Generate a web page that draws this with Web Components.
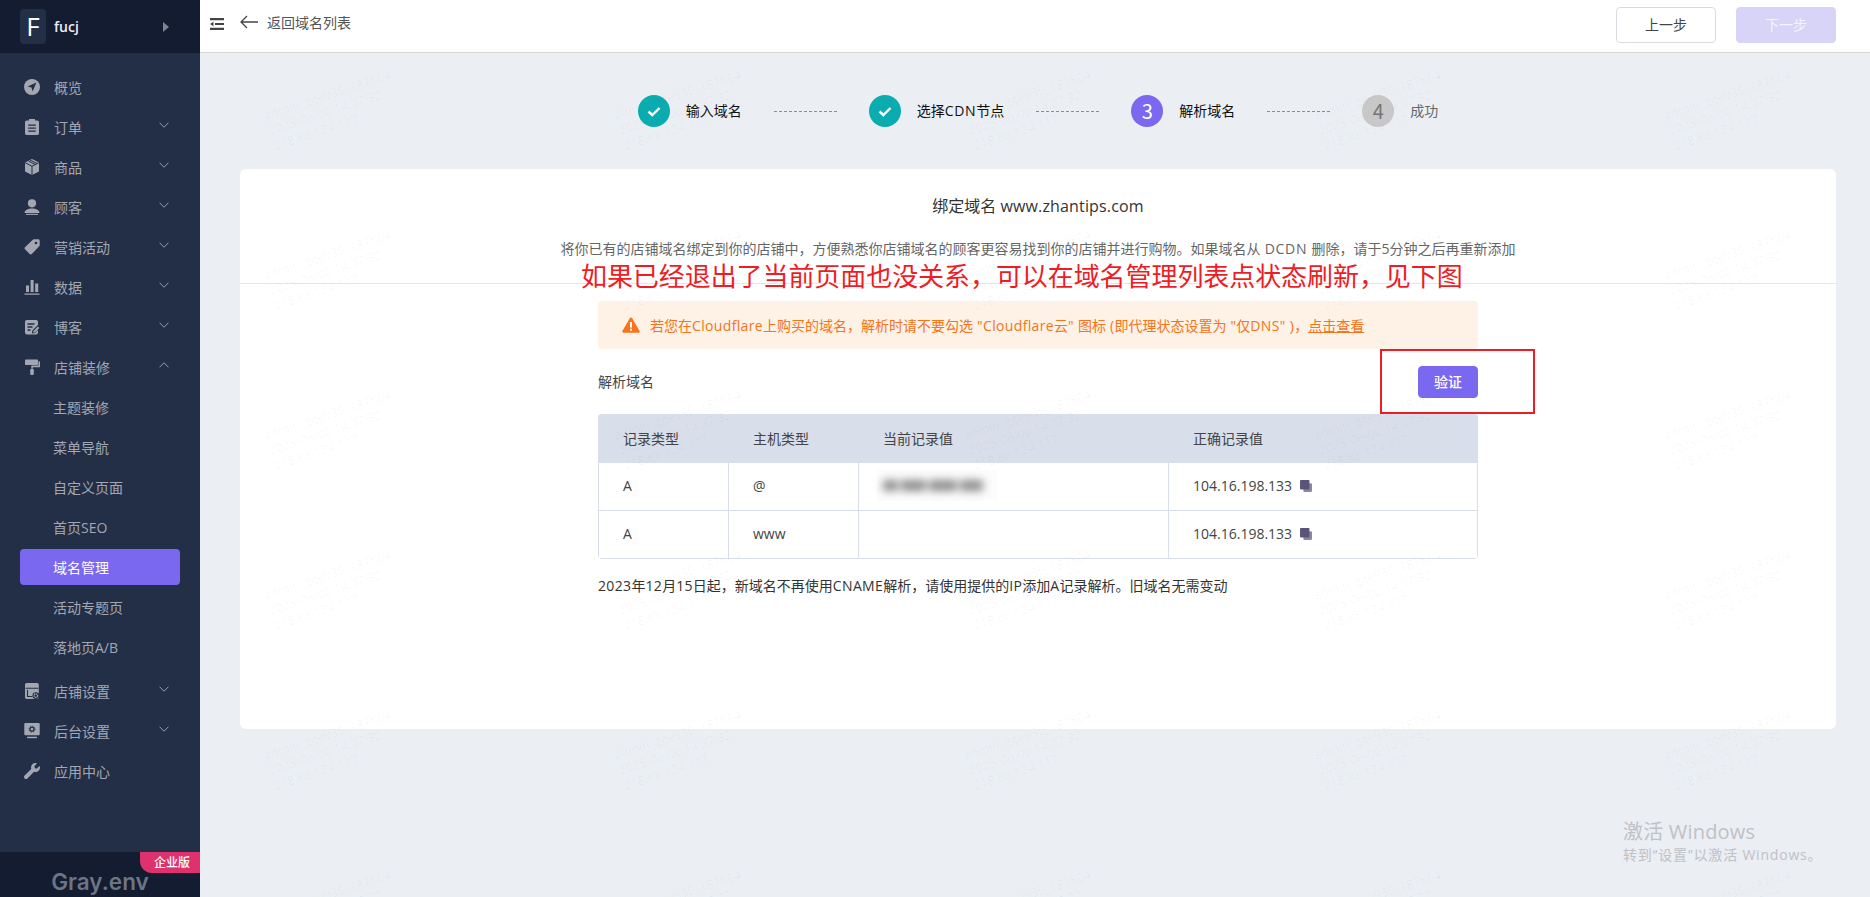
<!DOCTYPE html>
<html lang="zh-CN">
<head>
<meta charset="utf-8">
<title>绑定域名</title>
<style>
  html,body{margin:0;padding:0;height:897px;overflow:hidden;background:#ebeef3;}
  body{font-family:"Open Sans","Noto Sans CJK SC",sans-serif;font-size:14px;color:#333;}
  nav-item.after-sub{margin-top:4px;}
  .l{letter-spacing:.35px;}
  .m{letter-spacing:.15px;}
  .d{letter-spacing:.7px;}
</style>
</head>
<body>
<app-shell>
  <side-bar slot="side" name="fucj" letter="F">
    <nav-item icon="overview">概览</nav-item>
    <nav-item icon="order" chevron="down">订单</nav-item>
    <nav-item icon="box" chevron="down">商品</nav-item>
    <nav-item icon="user" chevron="down">顾客</nav-item>
    <nav-item icon="tag" chevron="down">营销活动</nav-item>
    <nav-item icon="chart" chevron="down">数据</nav-item>
    <nav-item icon="blog" chevron="down">博客</nav-item>
    <nav-item icon="roller" chevron="up">店铺装修</nav-item>
    <nav-item sub>主题装修</nav-item>
    <nav-item sub>菜单导航</nav-item>
    <nav-item sub>自定义页面</nav-item>
    <nav-item sub>首页SEO</nav-item>
    <nav-item sub active>域名管理</nav-item>
    <nav-item sub>活动专题页</nav-item>
    <nav-item sub>落地页A/B</nav-item>
    <nav-item class="after-sub" icon="store" chevron="down">店铺设置</nav-item>
    <nav-item icon="monitor" chevron="down">后台设置</nav-item>
    <nav-item icon="wrench">应用中心</nav-item>
    <side-foot slot="foot" badge="企业版">Gray.env</side-foot>
  </side-bar>

  <top-bar slot="top">
    <span slot="back">返回域名列表</span>
    <ui-button slot="actions">上一步</ui-button>
    <ui-button slot="actions" variant="disabled">下一步</ui-button>
  </top-bar>

  <step-bar slot="main">
    <step-item state="done">输入域名</step-item>
    <step-line></step-line>
    <step-item state="done">选择<span class="d">CDN</span>节点</step-item>
    <step-line></step-line>
    <step-item state="current" num="3">解析域名</step-item>
    <step-line></step-line>
    <step-item state="todo" num="4">成功</step-item>
  </step-bar>

  <domain-card slot="main">
    <span slot="title">绑定域名 <span class="m">www.zhantips.com</span></span>
    <span slot="desc">将你已有的店铺域名绑定到你的店铺中，方便熟悉你店铺域名的顾客更容易找到你的店铺并进行购物。如果域名从<span class="d"> DCDN </span>删除，请于5分钟之后再重新添加</span>
    <warn-alert>若您在<span class="l">Cloudflare</span>上购买的域名，解析时请不要勾选<span class="l"> "Cloudflare</span>云<span class="l">" </span>图标<span class="l"> (</span>即代理状态设置为<span class="l"> "</span>仅<span class="l">DNS" )</span>，<u>点击查看</u></warn-alert>
    <span slot="label">解析域名</span>
    <ui-button slot="action" variant="primary">验证</ui-button>
    <record-table slot="table"></record-table>
    <span slot="note"><span class="l">2023</span>年<span class="l">12</span>月<span class="l">15</span>日起，新域名不再使用<span class="l">CNAME</span>解析，请使用提供的<span class="l">IP</span>添加<span class="l">A</span>记录解析。旧域名无需变动</span>
    <red-note slot="overlay">如果已经退出了当前页面也没关系，可以在域名管理列表点状态刷新，见下图</red-note>
  </domain-card>

  <water-mark slot="over"></water-mark>
  <win-activate slot="over"></win-activate>
</app-shell>

<script>
const ICONS = {
  overview:'<circle cx="8" cy="8" r="8" fill="currentColor"/><path d="M12.4 3.6 3.6 7.4l3.9 1.1 1.1 3.9z" fill="#232f47"/>',
  order:'<path fill="currentColor" d="M5 0h6v1.5h2.2A1.8 1.8 0 0 1 15 3.3v11A1.7 1.7 0 0 1 13.300 16H2.700A1.700 1.700 0 0 1 1 14.300v-11A1.800 1.800 0 0 1 2.800 1.500H5z"/><path stroke="#232f47" stroke-width="1.200" d="M4.200 6.200h7.600M4.200 9.200h7.600M4.200 12.200h7.600"/>',
  box:'<path fill="currentColor" d="M8 0l7 3.400v9.200L8 16l-7-3.400V3.400z"/><path fill="none" stroke="#232f47" stroke-width="1" d="M1 3.700l7 3.500 7-3.500M8 7.200V16M4.300 2l7 3.500M6 1l7 3.500"/>',
  user:'<circle cx="8" cy="4.300" r="4.100" fill="currentColor"/><path fill="currentColor" d="M.5 14c0-3 3.500-4.600 7.500-4.600s7.500 1.600 7.500 4.600z"/><path fill="currentColor" d="M2 14.800h12v1.100H2z"/>',
  tag:'<path fill="currentColor" d="M10 .3h4.200c.9 0 1.500.6 1.500 1.500v4.200c0 .5-.2.900-.5 1.200L7.800 15c-.6.6-1.500.6-2.100 0L1 10.300c-.6-.6-.6-1.500 0-2.100L8.800.8c.3-.3.700-.5 1.200-.5z"/><circle cx="12" cy="4" r="1.300" fill="#232f47"/>',
  chart:'<path fill="currentColor" d="M2 6.500h3V13H2zM6.600 1h3v12h-3zM11.200 4.500h3V13h-3zM.5 14.500h15v1.200H.5z"/>',
  blog:'<rect x="1" y="1" width="13" height="14.500" rx="2" fill="currentColor"/><path stroke="#232f47" stroke-width="1.300" d="M3.500 5h7M3.500 8h5M3.500 11h3"/><path fill="#232f47" d="M8 14.500l.4-3 5.500-5.500 2.600 2.600-5.500 5.500z"/><path fill="currentColor" d="M9.300 13.600l.2-1.600 4.400-4.400 1.400 1.400-4.400 4.400z"/>',
  roller:'<path fill="currentColor" d="M2 .5h11c.6 0 1 .4 1 1V5c0 .6-.4 1-1 1H2c-.6 0-1-.4-1-1V1.500c0-.6.4-1 1-1z"/><path fill="currentColor" d="M14.500 2.200h.8c.5 0 .7.300.7.700v4.500c0 .6-.3.900-.9.900H8.800v1.500H7.300V7.200c0-.4.200-.6.600-.6h6.600z"/><rect x="6.200" y="10" width="3.600" height="6" rx="1.200" fill="currentColor"/>',
  store:'<path fill="currentColor" d="M2.500 0h10.500A1.800 1.800 0 0 1 14.800 1.800V14.200A1.800 1.800 0 0 1 13 16H2.700A1.800 1.800 0 0 1 1 14.200V1.500A1.500 1.500 0 0 1 2.500 0z"/><path fill="none" stroke="#232f47" stroke-width="1.100" d="M1.500 5.300h13M3.500 7v6.500h5"/><circle cx="11.800" cy="12.600" r="3.400" fill="#232f47"/><circle cx="11.800" cy="12.600" r="1.800" fill="none" stroke="currentColor" stroke-width="1.300" stroke-dasharray="1.400 .5"/>',
  monitor:'<rect x=".3" y="0" width="15.400" height="12.300" rx="1" fill="currentColor"/><circle cx="8" cy="6.200" r="2" fill="none" stroke="#232f47" stroke-width="1.300"/><circle cx="8" cy="6.200" r="3" fill="none" stroke="#232f47" stroke-width=".9" stroke-dasharray="1.100 1.250"/><rect x="3" y="13.700" width="10" height="1.500" fill="currentColor"/>',
  wrench:'<path transform="scale(.03125)" fill="currentColor" d="M507.730 109.100c-2.240-9.030-13.540-12.090-20.120-5.510l-74.360 74.360-67.880-11.310-11.310-67.880 74.360-74.360c6.620-6.620 3.430-17.900-5.660-20.160-47.380-11.740-99.550.91-136.580 37.930-39.640 39.640-50.550 97.100-34.050 147.200L18.740 402.760c-24.990 24.990-24.990 65.510 0 90.500 24.990 24.990 65.510 24.990 90.500 0l213.210-213.210c50.120 16.710 107.470 5.680 147.370-34.220 37.070-37.070 49.700-89.320 37.910-136.730z"/>'
};

function define(name, css, html){
  customElements.define(name, class extends HTMLElement{
    constructor(){
      super();
      const r = this.attachShadow({mode:'open'});
      r.innerHTML = '<style>'+css+'</style>'+(typeof html==='function'?'':html);
    }
    connectedCallback(){
      if(typeof html==='function' && !this._done){
        this._done = true;
        const d = document.createElement('div');
        d.innerHTML = html(this);
        while(d.firstChild) this.shadowRoot.appendChild(d.firstChild);
      }
    }
  });
}

define('app-shell',
  `:host{display:grid;grid-template-columns:200px 1fr;grid-template-rows:53px 844px;width:1870px;height:897px;position:relative;overflow:hidden;background:#ebeef3;}
   .content{display:block;padding:0 34px 0 40px;min-width:0;}
   .over{position:absolute;left:0;top:0;width:100%;height:100%;pointer-events:none;display:block;}`,
  `<slot name="side"></slot><slot name="top"></slot>
   <div class="content"><slot name="main"></slot></div>
   <div class="over"><slot name="over"></slot></div>`);

define('side-bar',
  `:host{display:flex;flex-direction:column;grid-row:1 / 3;background:#232f47;height:897px;width:200px;}
   .head{height:53px;background:#131c30;display:flex;align-items:center;padding-left:20px;box-sizing:border-box;flex:none;}
   .logo{width:26px;height:35px;border-radius:4px;background:#232f47;color:#fff;font-size:26px;line-height:35px;text-align:center;margin-right:8px;}
   .name{font-size:14px;font-weight:600;color:#eceef1;flex:1;}
   .tri{width:0;height:0;border-left:6px solid #7e8492;border-top:5px solid transparent;border-bottom:5px solid transparent;margin-right:31px;}
   nav{padding-top:14px;flex:1;display:block;}`,
  el => `<div class="head"><div class="logo">${el.getAttribute('letter')}</div><div class="name">${el.getAttribute('name')}</div><div class="tri"></div></div>
   <nav><slot></slot></nav><slot name="foot"></slot>`);

define('nav-item',
  `:host{display:block;height:40px;padding:2px 20px;box-sizing:border-box;color:#a3a7b2;font-size:14px;}
   .row{height:36px;display:flex;align-items:center;border-radius:4px;padding-left:4px;}
   :host([sub]) .row{padding-left:33px;}
   :host([active]) .row{background:#7a68f0;color:#fff;}
   svg.i{width:16px;height:16px;margin-right:14px;flex:none;color:#a3a7b2;}
   .t{flex:1;white-space:nowrap;}
   svg.c{width:10px;height:6px;margin:0 11px 5px 0;flex:none;}`,
  el => {
    const ic = el.getAttribute('icon'), ch = el.getAttribute('chevron');
    const i = ic ? `<svg class="i" viewBox="0 0 16 16">${ICONS[ic]}</svg>` : '';
    const c = ch ? `<svg class="c" viewBox="0 0 10 6"><path d="${ch==='up'?'M.5 5.300 5 .8l4.500 4.500':'M.5.700 5 5.200 9.500.7'}" fill="none" stroke="#9a9eaa" stroke-width="1"/></svg>` : '';
    return `<div class="row">${i}<span class="t"><slot></slot></span>${c}</div>`;
  });

define('side-foot',
  `:host{display:block;height:45px;background:#131c30;position:relative;text-align:center;flex:none;}
   .badge{position:absolute;right:0;top:0;width:56px;padding-left:4px;height:21px;background:#e0316f;color:#fff;font-size:12px;font-weight:500;line-height:21px;text-align:center;border-bottom-left-radius:12px;}
   .brand{position:absolute;left:0;width:200px;top:15px;font:600 22.500px/30px Inter,"Open Sans",sans-serif;color:#6d7485;}`,
  el => `<div class="brand"><slot></slot></div><div class="badge">${el.getAttribute('badge')}</div>`);

define('top-bar',
  `:host{display:flex;align-items:center;background:#fff;height:53px;box-sizing:border-box;border-bottom:1px solid #d9d9d9;padding:0 34px 2px 10px;}
   svg.m{width:14px;height:12px;margin:0 16px 2px 0;flex:none;}
   svg.b{width:18px;height:14px;margin:0 9px 6px 0;flex:none;}
   .back{font-size:14px;color:#555;flex:1;margin-bottom:6px;}
   .acts{display:flex;gap:20px;}`,
  `<svg class="m" viewBox="0 0 14 12"><path d="M0 0h14v2.200H0zM0 9.800h14V12H0zM5 4.900h9v2.200H5z" fill="#444"/><path d="M0 6l3.500-2.200v4.400z" fill="#444"/></svg>
   <svg class="b" viewBox="0 0 18 14"><path d="M7 1 1 7l6 6M1 7h17" fill="none" stroke="#444" stroke-width="1.300"/></svg>
   <div class="back"><slot name="back"></slot></div>
   <div class="acts"><slot name="actions"></slot></div>`);

define('ui-button',
  `:host{display:inline-flex;align-items:center;justify-content:center;box-sizing:border-box;width:100px;height:36px;border-radius:4px;border:1px solid #d8dbe6;background:#fff;color:#444;font-size:14px;}
   :host([variant=disabled]){background:#d7d4f7;border-color:#d7d4f7;color:#f4f3fe;}
   :host([variant=primary]){background:#7a68f0;border-color:#7a68f0;color:#fff;width:60px;height:32px;font-weight:500;}
   span{margin-bottom:2px;}`,
  `<span><slot></slot></span>`);

define('step-bar',
  `:host{display:flex;align-items:center;justify-content:center;height:116px;}`,
  `<slot></slot>`);

define('step-item',
  `:host{display:flex;align-items:center;font-size:14px;color:#111;white-space:nowrap;}
   :host([state=todo]){color:#666;}
   .c{width:32px;height:32px;border-radius:50%;display:flex;align-items:center;justify-content:center;margin-right:16px;color:#fff;font:400 20px/32px "Noto Sans CJK SC",sans-serif;}
   :host([state=done]) .c{background:#0aacb0;}
   :host([state=current]) .c{background:#7a68f0;}
   :host([state=todo]) .c{background:#c8c8c8;color:#777;}
   .lab{margin-bottom:2px;}`,
  el => {
    const n = el.getAttribute('num');
    const inner = n || '<svg width="14" height="11" viewBox="0 0 14 11"><path d="M1.500 5.500 5.300 9 12.500 2" fill="none" stroke="#fff" stroke-width="2.400"/></svg>';
    return `<div class="c">${inner}</div><span class="lab"><slot></slot></span>`;
  });

define('step-line',
  `:host{display:block;width:63px;height:0;border-top:1px dashed #8a8d94;margin:0 32px;}`,
  ``);

define('domain-card',
  `:host{display:block;position:relative;height:560px;background:#fff;border-radius:6px;}
   .hd{height:115px;box-sizing:border-box;border-bottom:1px solid #e6e6e6;text-align:center;padding-top:25px;}
   .title{font-size:16px;line-height:24px;color:#333;}
   .desc{font-size:14px;line-height:20px;color:#666;margin-top:21px;}
   .bd{width:880px;margin:0 auto;padding-top:17px;}
   .row{display:flex;align-items:center;justify-content:space-between;margin:17px 0 16px;font-size:14px;color:#444;}
   .lab{margin-bottom:2px;}
   .note{font-size:14px;line-height:20px;color:#333;margin-top:17px;}`,
  `<div class="hd"><div class="title"><slot name="title"></slot></div><div class="desc"><slot name="desc"></slot></div></div>
   <div class="bd"><slot></slot>
     <div class="row"><span class="lab"><slot name="label"></slot></span><slot name="action"></slot></div>
     <slot name="table"></slot>
     <div class="note"><slot name="note"></slot></div>
   </div><slot name="overlay"></slot>`);

define('warn-alert',
  `:host{display:flex;align-items:center;height:48px;background:#fdf2e5;border-radius:4px;padding-left:24px;box-sizing:border-box;color:#f7731c;font-size:14px;white-space:nowrap;}
   svg{width:18px;height:16px;margin-right:10px;flex:none;}`,
  `<svg viewBox="0 0 18 16"><path d="M9 .5c.5 0 .9.300 1.200.8l7.400 12.600c.5.900 0 1.900-1.100 1.900H1.500C.4 15.800-.1 14.800.4 13.900L7.800 1.300C8.100.8 8.500.5 9 .5z" fill="#f7731c"/><path d="M8 5h2v5.500H8zM8 11.700h2v2H8z" fill="#fff"/></svg><span><slot></slot></span>`);

define('record-table',
  `:host{display:grid;grid-template-columns:130px 130px 310px 310px;grid-template-rows:49px 48px 48px;width:880px;border-radius:4px;overflow:hidden;color:#444;font-size:14px;}
   .c{display:flex;align-items:center;padding:0 0 2px 24px;box-sizing:border-box;border-bottom:1px solid #d8deea;border-left:1px solid #d8deea;white-space:nowrap;}
   .e{border-right:1px solid #d8deea;}
   .h{background:#d8deea;border-bottom:0;color:#444;}
   .box{display:flex;align-items:center;width:120px;height:31px;margin-left:-6px;padding-left:6px;box-sizing:border-box;background:#fcfcfc;}
   .blur{display:flex;gap:3px;filter:blur(4px);}
   .blur i{display:block;height:11px;background:#8c8c8c;border-radius:2px;}
   svg{width:12px;height:12px;margin-left:8px;flex:none;}`,
  () => {
    const copy = '<svg viewBox="0 0 12 12"><path d="M3.500 3.500H12V10.500A1.500 1.500 0 0 1 10.500 12H3.500z" fill="#8a86a3"/><rect x="0" y="0" width="9.500" height="9.500" rx="1" fill="#5a5478"/></svg>';
    const blur = '<div class="box"><div class="blur"><i style="width:15px"></i><i style="width:25px"></i><i style="width:28px"></i><i style="width:23px"></i></div></div>';
    return `<div class="c h">记录类型</div><div class="c h">主机类型</div><div class="c h">当前记录值</div><div class="c h e">正确记录值</div>
    <div class="c">A</div><div class="c">@</div><div class="c">${blur}</div><div class="c e">104.16.198.133${copy}</div>
    <div class="c">A</div><div class="c">www</div><div class="c"></div><div class="c e">104.16.198.133${copy}</div>`;
  });

define('red-note',
  `:host{display:block;position:absolute;left:0;top:0;width:0;height:0;}
   .t{position:absolute;left:341px;top:87px;font-size:26px;line-height:40px;color:#ee1c25;white-space:nowrap;letter-spacing:-.07px;}
   .b{position:absolute;left:1140px;top:180px;width:155px;height:65px;box-sizing:border-box;border:2px solid #ee1c25;}`,
  `<div class="t"><slot></slot></div><div class="b"></div>`);

define('water-mark',
  `:host{position:absolute;left:200px;top:53px;display:grid;grid-template-columns:repeat(5,350px);grid-auto-rows:160px;}
   .w{padding:34px 0 0 66px;}
   .t{width:130px;font:12.500px/16px "Open Sans",sans-serif;color:rgba(0,0,0,.04);transform:rotate(-18deg);white-space:nowrap;}`,
  () => {
    let s = '';
    for(let i=0;i<30;i++) s += '<div class="w"><div class="t">admin_gge935_187864<br>2025-06-06 14:37:32<br>218.88.124.117</div></div>';
    return s;
  });

define('win-activate',
  `:host{position:absolute;left:1623px;top:819px;color:#bfc1c6;}
   .a{font-size:20px;line-height:26px;letter-spacing:.2px;}
   .b{font-size:14px;line-height:20px;letter-spacing:.8px;}`,
  `<div class="a">激活 Windows</div><div class="b">转到“设置”以激活 Windows。</div>`);
</script>
</body>
</html>
